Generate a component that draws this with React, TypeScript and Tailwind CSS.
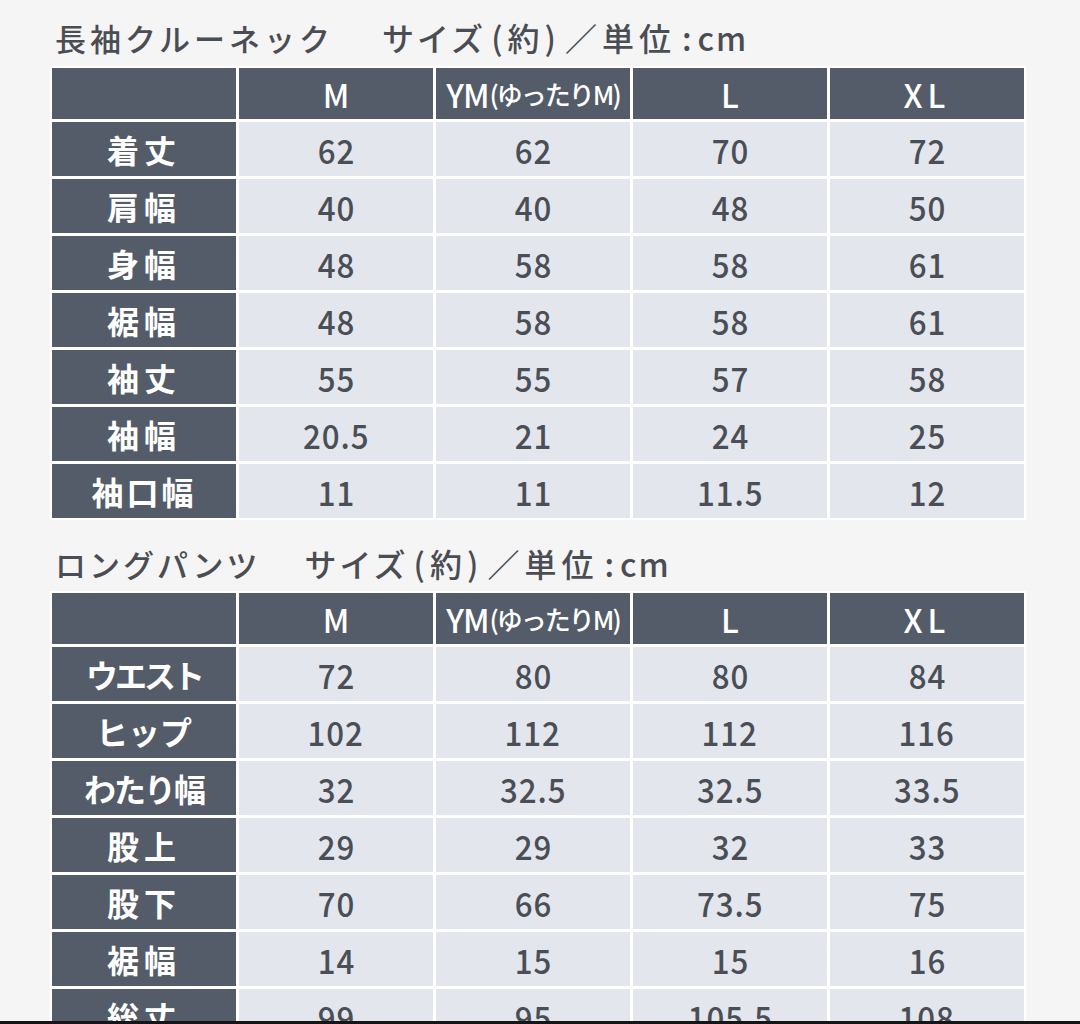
import React from 'react';

type Row = { label: string; track: string; values: string[] };

const topRows: Row[] = [
  { label: '着丈', track: 'tracking-[5px]', values: ['62', '62', '70', '72'] },
  { label: '肩幅', track: 'tracking-[5px]', values: ['40', '40', '48', '50'] },
  { label: '身幅', track: 'tracking-[5px]', values: ['48', '58', '58', '61'] },
  { label: '裾幅', track: 'tracking-[5px]', values: ['48', '58', '58', '61'] },
  { label: '袖丈', track: 'tracking-[5px]', values: ['55', '55', '57', '58'] },
  { label: '袖幅', track: 'tracking-[5px]', values: ['20.5', '21', '24', '25'] },
  { label: '袖口幅', track: 'tracking-[3px]', values: ['11', '11', '11.5', '12'] },
];

const bottomRows: Row[] = [
  { label: 'ウエスト', track: 'tracking-[-3px]', values: ['72', '80', '80', '84'] },
  { label: 'ヒップ', track: 'tracking-[0px]', values: ['102', '112', '112', '116'] },
  { label: 'わたり幅', track: 'tracking-[-2px]', values: ['32', '32.5', '32.5', '33.5'] },
  { label: '股上', track: 'tracking-[5px]', values: ['29', '29', '32', '33'] },
  { label: '股下', track: 'tracking-[5px]', values: ['70', '66', '73.5', '75'] },
  { label: '裾幅', track: 'tracking-[5px]', values: ['14', '15', '15', '16'] },
  { label: '総丈', track: 'tracking-[5px]', values: ['99', '95', '105.5', '108'] },
];

function Title({ name, nameClass }: { name: string; nameClass: string }) {
  return (
    <div className="flex h-[40px] items-center pl-[5px] text-[32px] font-medium leading-none text-[#4a4d53]">
      <span className={nameClass}>{name}</span>
      <span className="tracking-[3px]">サイズ</span>
      <span className="ml-[5px]">(</span>
      <span className="mx-[5px]">約</span>
      <span>)</span>
      <span className="ml-[9px] tracking-[5px]">／単位</span>
      <span className="mx-[6px]">:</span>
      <span className="tracking-[2px]">cm</span>
    </div>
  );
}

function SizeTable({ rows }: { rows: Row[] }) {
  return (
    <div className="grid w-fit grid-cols-[184px_repeat(4,194px)] gap-[3px] bg-white p-[2px]">
      <div className="h-[51px] bg-[#535c68]" />
      <div className="flex h-[51px] items-center justify-center bg-[#535c68] text-[32px] font-medium text-white">M</div>
      <div className="flex h-[51px] items-center justify-center bg-[#535c68] font-medium text-white">
        <span className="text-[32px] tracking-[-1px]">YM</span>
        <span className="ml-[1px] inline-block text-[26px] tracking-[-2px]">(ゆったりM)</span>
      </div>
      <div className="flex h-[51px] items-center justify-center bg-[#535c68] text-[32px] font-medium text-white">L</div>
      <div className="flex h-[51px] items-center justify-center bg-[#535c68] text-[32px] font-medium tracking-[5px] text-white">XL</div>
      {rows.map((row) => (
        <React.Fragment key={row.label}>
          <div className={`flex h-[54px] items-center justify-center bg-[#535c68] text-[32px] font-bold text-white ${row.track}`}>
            {row.label}
          </div>
          {row.values.map((v, i) => (
            <div key={i} className="flex h-[54px] items-center justify-center bg-[#e3e6ec] text-[#4a4e56]">
              <span className="inline-block scale-x-[0.92] text-[34px] font-medium tracking-[1px]">{v}</span>
            </div>
          ))}
        </React.Fragment>
      ))}
    </div>
  );
}

export default function App() {
  return (
    <div
      className="flex h-[1024px] flex-col overflow-hidden bg-[#f5f5f5]"
      style={{ fontFamily: '"Noto Sans CJK JP", "Noto Sans", sans-serif' }}
    >
      <div className="flex-1 overflow-hidden pl-[50px] pt-[17px]">
        <Title name="長袖クルーネック" nameClass="mr-[48px] text-[31px] tracking-[4px]" />
        <div className="mt-[9px]">
          <SizeTable rows={topRows} />
        </div>
        <div className="mt-[23px]">
          <Title name="ロングパンツ" nameClass="mr-[44px] text-[31px] tracking-[3px]" />
        </div>
        <div className="mt-[8px]">
          <SizeTable rows={bottomRows} />
        </div>
      </div>
      <div className="h-[3px] bg-[#151515]" />
    </div>
  );
}
